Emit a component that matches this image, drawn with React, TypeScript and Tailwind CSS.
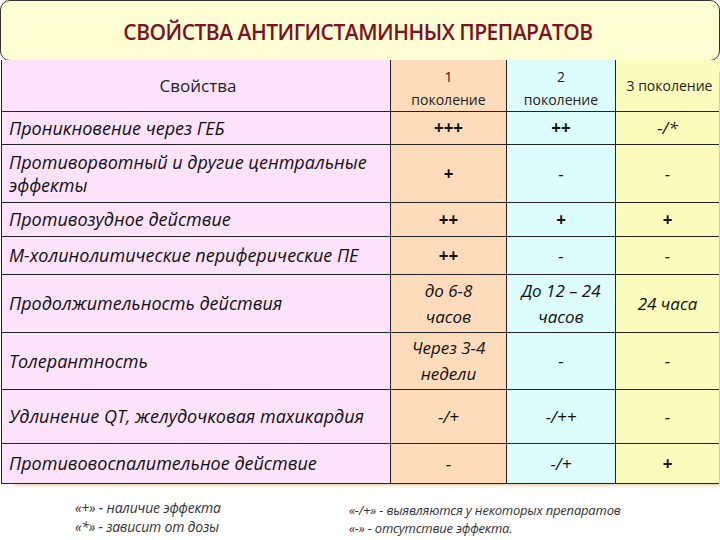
import React from "react";

type Row = {
  label: string;
  h: string;
  g1: React.ReactNode;
  g2: React.ReactNode;
  g3: React.ReactNode;
};

const rows: Row[] = [
  { label: "Проникновение через ГЕБ", h: "h-[33px]", g1: "+++", g2: "++", g3: "-/*" },
  {
    label: "Противорвотный и другие центральные эффекты",
    h: "h-[58px]",
    g1: "+",
    g2: "-",
    g3: "-",
  },
  { label: "Противозудное действие", h: "h-[34px]", g1: "++", g2: "+", g3: "+" },
  { label: "М-холинолитические периферические ПЕ", h: "h-[38px]", g1: "++", g2: "-", g3: "-" },
  {
    label: "Продолжительность действия",
    h: "h-[58px]",
    g1: (
      <>
        до 6-8
        <br />
        часов
      </>
    ),
    g2: (
      <>
        До 12 – 24
        <br />
        часов
      </>
    ),
    g3: "24 часа",
  },
  {
    label: "Толерантность",
    h: "h-[57px]",
    g1: (
      <>
        Через 3-4
        <br />
        недели
      </>
    ),
    g2: "-",
    g3: "-",
  },
  { label: "Удлинение QT, желудочковая тахикардия", h: "h-[54px]", g1: "-/+", g2: "-/++", g3: "-" },
  { label: "Противовоспалительное действие", h: "h-[40px]", g1: "-", g2: "-/+", g3: "+" },
];

const font = "font-['Open_Sans','Noto_Sans',sans-serif]";
const cols = "grid grid-cols-[389px_116px_109px_1fr] grid-rows-[100%]";

// pure plus signs are heavy in the picture, words and dashes are lighter
function Val({ v }: { v: React.ReactNode }) {
  const heavy = typeof v === "string" && /^\+{1,3}$/.test(v);
  return <span className={heavy ? "font-bold not-italic" : "font-medium"}>{v}</span>;
}

export default function App() {
  return (
    <div className={`w-[720px] h-[540px] bg-white overflow-hidden ${font}`}>
      <div className="h-[61px] rounded-[10px] border border-[#333] bg-[#fefed4] flex items-center justify-center">
        <h1 className="text-[21px] font-semibold tracking-[-0.5px] text-[#7e1024] pt-1 pr-[4px]">
          СВОЙСТВА АНТИГИСТАМИННЫХ ПРЕПАРАТОВ
        </h1>
      </div>

      <div className="-mt-px mx-px border-l border-[#222] shadow-[8px_6px_4px_-5px_rgba(190,150,60,0.55)]">
        <div className={`${cols} h-[52px] border-b border-[#222] text-[#222]`}>
          <div className="bg-[#fde2fc] flex items-center justify-center border-r border-[#222] text-[17px] pl-1">
            Свойства
          </div>
          <div className="bg-[#fddbbb] flex flex-col items-center justify-center border-r border-[#222] text-[14px] leading-[23px] pt-1">
            <span>1</span>
            <span>поколение</span>
          </div>
          <div className="bg-[#dcfdfb] flex flex-col items-center justify-center border-r border-[#222] text-[14px] leading-[23px] pt-1">
            <span>2</span>
            <span>поколение</span>
          </div>
          <div className="bg-[#fefcbd] flex items-center justify-center text-[14px] pl-1">
            3 поколение
          </div>
        </div>

        {rows.map((r) => (
          <div key={r.label} className={`${cols} ${r.h} border-b border-[#222] text-[#111]`}>
            <div className="bg-[#fde2fc] flex items-center overflow-hidden border-r border-[#222] px-[7px] text-[18px] leading-[23px] italic font-medium">
              {r.label}
            </div>
            <div className="bg-[#fddbbb] flex items-center justify-center overflow-hidden text-center border-r border-[#222] text-[17px] leading-[26px] italic">
              <Val v={r.g1} />
            </div>
            <div className="bg-[#dcfdfb] flex items-center justify-center overflow-hidden text-center border-r border-[#222] text-[17px] leading-[26px] italic">
              <Val v={r.g2} />
            </div>
            <div className="bg-[#fefcbd] flex items-center justify-center overflow-hidden text-center text-[17px] italic">
              <Val v={r.g3} />
            </div>
          </div>
        ))}
      </div>

      <div className="flex mt-[14px] italic text-[#333]">
        <div className="w-[349px] pl-[75px] text-[14px] leading-[19px] tracking-[-0.2px]">
          <div>«+» - наличие эффекта</div>
          <div>«*» - зависит от дозы</div>
        </div>
        <div className="pt-[3px] text-[13px] leading-[18px] tracking-[-0.2px]">
          <div>«-/+» - выявляются у некоторых препаратов</div>
          <div>«-» - отсутствие эффекта.</div>
        </div>
      </div>
    </div>
  );
}
